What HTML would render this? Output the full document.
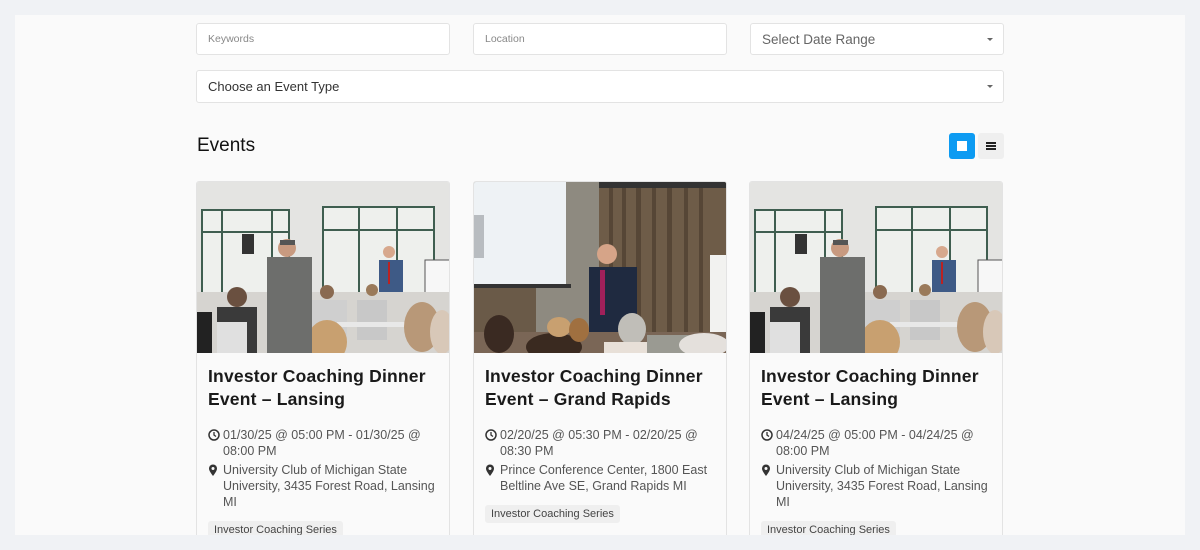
<!DOCTYPE html>
<html><head><meta charset="utf-8"><style>
*{box-sizing:border-box;margin:0;padding:0}
html,body{width:1200px;height:550px;overflow:hidden}
body{background:#f0f2f5;font-family:"Liberation Sans",sans-serif;position:relative}
.wrap{position:absolute;left:15px;top:15px;width:1170px;height:520px;background:#fafafa}
.in{position:absolute;background:#fff;border:1px solid #e3e3e3;border-radius:3px;height:32px;color:#777;display:flex;align-items:center;padding-left:11px}
.caret{position:absolute;right:10px;top:14px;width:0;height:0;border-left:3px solid transparent;border-right:3px solid transparent;border-top:3px solid #666}
h2{position:absolute;left:197px;top:135px;font-size:19px;font-weight:normal;color:#111}
.card{position:absolute;top:181px;width:254px;height:360px;background:#fafafa;border:1px solid #e3e3e3;border-radius:3px;overflow:hidden}
.card svg{display:block}
.t{position:absolute;left:11px;top:183px;font-size:17.5px;font-weight:bold;line-height:23px;color:#1a1a1a;letter-spacing:0.2px}
.m{position:absolute;left:26px;font-size:12.5px;line-height:16px;color:#555}
.ic{position:absolute;left:-15px;top:2px}
.tag{position:absolute;left:11px;padding:3px 6px;background:#efefef;border-radius:3px;font-size:11px;color:#444}
</style></head><body>
<div class="wrap"></div>
<div class="in" style="left:196px;top:23px;width:254px;font-size:10.5px;color:#888">Keywords</div>
<div class="in" style="left:473px;top:23px;width:254px;font-size:10.5px;color:#888">Location</div>
<div class="in" style="left:750px;top:23px;width:254px;font-size:13.5px;color:#666">Select Date Range<span class="caret"></span></div>
<div class="in" style="left:196px;top:70px;width:808px;height:33px;font-size:13px;color:#333">Choose an Event Type<span class="caret"></span></div>
<h2>Events</h2>
<div style="position:absolute;left:949px;top:133px;width:26px;height:26px;background:#0d9bf2;border-radius:3px"><div style="position:absolute;left:8px;top:8px;width:10px;height:10px;background:#fff"></div></div>
<div style="position:absolute;left:978px;top:133px;width:26px;height:26px;background:#efefef;border-radius:3px"><div style="position:absolute;left:8px;top:9px;width:10px;height:8px;border-top:2px solid #222;border-bottom:2px solid #222"></div><div style="position:absolute;left:8px;top:12px;width:10px;height:2px;background:#222"></div></div>

<svg width="0" height="0" style="position:absolute"><defs>
<g id="pa">
<rect width="253" height="171" fill="#e4e4e2"/>
<rect x="5" y="28" width="87" height="84" fill="#eef0ed" stroke="#3f5e50" stroke-width="2"/>
<line x1="25" y1="28" x2="25" y2="112" stroke="#3f5e50" stroke-width="2"/><line x1="75" y1="28" x2="75" y2="112" stroke="#3f5e50" stroke-width="2"/>
<line x1="5" y1="50" x2="92" y2="50" stroke="#3f5e50" stroke-width="2"/>
<rect x="45" y="52" width="12" height="20" fill="#333"/>
<rect x="126" y="25" width="111" height="87" fill="#eef0ed" stroke="#3f5e50" stroke-width="2"/>
<line x1="162" y1="25" x2="162" y2="112" stroke="#3f5e50" stroke-width="2"/><line x1="200" y1="25" x2="200" y2="112" stroke="#3f5e50" stroke-width="2"/>
<line x1="126" y1="48" x2="237" y2="48" stroke="#3f5e50" stroke-width="2"/>
<rect x="228" y="78" width="25" height="40" fill="#f7f7f7" stroke="#555"/>
<rect x="182" y="78" width="24" height="52" fill="#3e5a86"/><circle cx="192" cy="70" r="6" fill="#d7a88d"/><rect x="191" y="80" width="2" height="22" fill="#b22"/>
<rect x="0" y="110" width="253" height="61" fill="#d6d4d0"/>
<rect x="20" y="125" width="40" height="46" fill="#3a3a3a"/><circle cx="40" cy="115" r="10" fill="#6a5040"/>
<rect x="0" y="130" width="15" height="41" fill="#222"/>
<rect x="115" y="118" width="35" height="45" fill="#cfcfcf"/><circle cx="130" cy="110" r="7" fill="#8a6a50"/>
<rect x="160" y="118" width="30" height="40" fill="#c8c8c8"/><circle cx="175" cy="108" r="6" fill="#9a7a5a"/>
<rect x="140" y="140" width="80" height="5" fill="#e8e8e8"/>
<ellipse cx="130" cy="160" rx="20" ry="22" fill="#c8a070"/>
<ellipse cx="225" cy="145" rx="18" ry="25" fill="#b89878"/><ellipse cx="245" cy="150" rx="12" ry="22" fill="#d8c8b8"/>
<rect x="70" y="75" width="45" height="96" fill="#6d6e6c"/><circle cx="90" cy="66" r="9" fill="#c89a80"/><rect x="83" y="58" width="15" height="5" fill="#555"/>
<rect x="20" y="140" width="30" height="31" fill="#e0e0e0"/>
</g>
<g id="pb">
<rect width="253" height="171" fill="#8e8a80"/>
<rect x="0" y="0" width="92" height="103" fill="#eef2f5"/><rect x="0" y="33" width="10" height="43" fill="#b8bcc0"/>
<rect x="0" y="102" width="97" height="4" fill="#333"/>
<rect x="125" y="0" width="128" height="171" fill="#6e5c48"/>
<g fill="#564636"><rect x="135" y="5" width="4" height="160"/><rect x="148" y="5" width="4" height="160"/><rect x="162" y="5" width="5" height="160"/><rect x="178" y="5" width="4" height="160"/><rect x="193" y="5" width="5" height="160"/><rect x="210" y="5" width="4" height="160"/><rect x="225" y="5" width="4" height="160"/></g>
<rect x="125" y="0" width="128" height="6" fill="#333"/>
<rect x="0" y="106" width="62" height="65" fill="#6a5a48"/>
<rect x="236" y="73" width="17" height="85" fill="#f2f2f0"/>
<rect x="115" y="85" width="48" height="86" fill="#1f2a40"/><circle cx="133" cy="72" r="10" fill="#d6a488"/><rect x="126" y="88" width="5" height="45" fill="#a0205a"/>
<rect x="0" y="150" width="253" height="21" fill="#7a6656"/>
<ellipse cx="25" cy="152" rx="15" ry="19" fill="#3a2a22"/><ellipse cx="80" cy="165" rx="28" ry="14" fill="#3a2a20"/>
<ellipse cx="85" cy="145" rx="12" ry="10" fill="#c8a070"/><ellipse cx="105" cy="148" rx="10" ry="12" fill="#a07040"/>
<ellipse cx="158" cy="147" rx="14" ry="16" fill="#c0beb8"/><rect x="130" y="160" width="55" height="11" fill="#e8e0d8"/>
<rect x="173" y="153" width="45" height="18" fill="#9a9a92"/><ellipse cx="230" cy="163" rx="25" ry="12" fill="#e4e0dc"/>
</g></defs></svg>

<div class="card" style="left:196px">
<svg width="253" height="171"><use href="#pa"/></svg>
<div class="t">Investor Coaching Dinner<br>Event – Lansing</div>
<div class="m" style="top:245px"><svg class="ic" width="12" height="12" viewBox="0 0 12 12"><circle cx="6" cy="6" r="5" fill="none" stroke="#333" stroke-width="1.5"/><path d="M6 3v3l2 1.5" fill="none" stroke="#333" stroke-width="1.3"/></svg>01/30/25 @ 05:00 PM - 01/30/25 @<br>08:00 PM</div>
<div class="m" style="top:280px"><svg class="ic" width="10" height="13" viewBox="0 0 10 13"><path d="M5 12C2 8 1 6 1 4.5a4 4 0 0 1 8 0C9 6 8 8 5 12z" fill="#333"/><circle cx="5" cy="4.5" r="1.5" fill="#fafafa"/></svg>University Club of Michigan State<br>University, 3435 Forest Road, Lansing<br>MI</div>
<div class="tag" style="top:339px">Investor Coaching Series</div>
</div>

<div class="card" style="left:473px">
<svg width="253" height="171"><use href="#pb"/></svg>
<div class="t">Investor Coaching Dinner<br>Event – Grand Rapids</div>
<div class="m" style="top:245px"><svg class="ic" width="12" height="12" viewBox="0 0 12 12"><circle cx="6" cy="6" r="5" fill="none" stroke="#333" stroke-width="1.5"/><path d="M6 3v3l2 1.5" fill="none" stroke="#333" stroke-width="1.3"/></svg>02/20/25 @ 05:30 PM - 02/20/25 @<br>08:30 PM</div>
<div class="m" style="top:280px"><svg class="ic" width="10" height="13" viewBox="0 0 10 13"><path d="M5 12C2 8 1 6 1 4.5a4 4 0 0 1 8 0C9 6 8 8 5 12z" fill="#333"/><circle cx="5" cy="4.5" r="1.5" fill="#fafafa"/></svg>Prince Conference Center, 1800 East<br>Beltline Ave SE, Grand Rapids MI</div>
<div class="tag" style="top:323px">Investor Coaching Series</div>
</div>

<div class="card" style="left:749px">
<svg width="253" height="171"><use href="#pa"/></svg>
<div class="t">Investor Coaching Dinner<br>Event – Lansing</div>
<div class="m" style="top:245px"><svg class="ic" width="12" height="12" viewBox="0 0 12 12"><circle cx="6" cy="6" r="5" fill="none" stroke="#333" stroke-width="1.5"/><path d="M6 3v3l2 1.5" fill="none" stroke="#333" stroke-width="1.3"/></svg>04/24/25 @ 05:00 PM - 04/24/25 @<br>08:00 PM</div>
<div class="m" style="top:280px"><svg class="ic" width="10" height="13" viewBox="0 0 10 13"><path d="M5 12C2 8 1 6 1 4.5a4 4 0 0 1 8 0C9 6 8 8 5 12z" fill="#333"/><circle cx="5" cy="4.5" r="1.5" fill="#fafafa"/></svg>University Club of Michigan State<br>University, 3435 Forest Road, Lansing<br>MI</div>
<div class="tag" style="top:339px">Investor Coaching Series</div>
</div>

<div style="position:absolute;left:0;top:535px;width:1200px;height:15px;background:#f0f2f5"></div>
</body></html>
